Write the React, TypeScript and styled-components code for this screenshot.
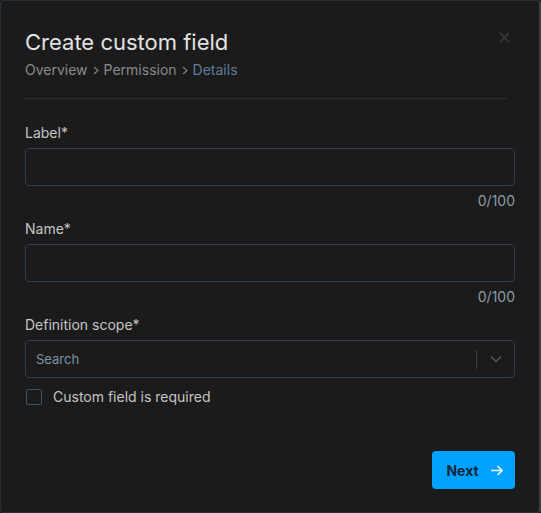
import React from 'react';
import styled, { createGlobalStyle } from 'styled-components';

const GlobalStyle = createGlobalStyle`
  html, body {
    margin: 0;
    padding: 0;
    background: #1b1b1b;
  }
  * {
    box-sizing: border-box;
  }
`;

const Modal = styled.div`
  position: relative;
  width: 541px;
  height: 513px;
  background: #1b1b1b;
  border: 1px solid #27313b;
  border-right: 2px solid #3a3f44;
  border-radius: 4px;
  padding: 26px 24px 0 24px;
  font-family: Inter, 'Noto Sans', sans-serif;
  color: #d0d0d0;
  display: flex;
  flex-direction: column;
`;

const Title = styled.h1`
  margin: 0;
  font-size: 22px;
  line-height: 30px;
  font-weight: 400;
  color: #e2e2e2;
`;

const Crumbs = styled.div`
  margin-top: 3px;
  display: flex;
  align-items: center;
  gap: 5px;
  font-size: 14px;
  line-height: 20px;
`;

const Crumb = styled.span<{ $active?: boolean }>`
  color: ${(p) => (p.$active ? '#5e7d96' : '#8a8a8a')};
`;

const Sep = styled.span`
  display: flex;
  align-items: center;
  margin-top: 1px;
`;

const Divider = styled.hr`
  margin: 18px 8px 0 0;
  border: none;
  border-top: 1px solid #24323f;
`;

const Close = styled.button`
  position: absolute;
  top: 30px;
  right: 29px;
  width: 12px;
  height: 12px;
  padding: 0;
  border: none;
  background: none;
  display: flex;
  align-items: center;
  justify-content: center;
`;

const Field = styled.div<{ $top: number }>`
  margin-top: ${(p) => p.$top}px;
  display: flex;
  flex-direction: column;
`;

const Label = styled.label`
  font-size: 14px;
  line-height: 20px;
  color: #c6c6c6;
  margin-bottom: 5px;
`;

const Input = styled.input`
  height: 38px;
  width: 100%;
  background: #1b1b1b;
  border: 1px solid #2f3e4c;
  border-radius: 4px;
  outline: none;
  color: #d0d0d0;
  font-family: inherit;
  font-size: 14px;
  padding: 0 11px;
`;

const Counter = styled.div`
  margin-top: 5px;
  align-self: flex-end;
  font-size: 14px;
  line-height: 20px;
  color: #8b9ba8;
`;

const Select = styled.div`
  height: 38px;
  border: 1px solid #2f3e4c;
  border-radius: 4px;
  display: flex;
  align-items: center;
  padding-left: 10px;
`;

const Placeholder = styled.span`
  flex: 1;
  font-size: 13px;
  color: #7d93a5;
`;

const SelectDivider = styled.span`
  width: 1px;
  height: 19px;
  background: #34434f;
`;

const Chevron = styled.span`
  width: 37px;
  display: flex;
  align-items: center;
  justify-content: center;
`;

const CheckRow = styled.label`
  margin-top: 9px;
  display: flex;
  align-items: center;
  gap: 11px;
  font-size: 14px;
  line-height: 20px;
  color: #c6c6c6;
`;

const Box = styled.span`
  width: 16px;
  height: 16px;
  border: 1px solid #3f5263;
  border-radius: 2px;
  margin-left: 1px;
`;

const Footer = styled.div`
  margin-top: 44px;
  display: flex;
  justify-content: flex-end;
`;

const NextButton = styled.button`
  height: 38px;
  width: 83px;
  border: none;
  border-radius: 4px;
  background: #00a2ff;
  color: #17273a;
  font-family: inherit;
  font-size: 14px;
  font-weight: 700;
  display: flex;
  align-items: center;
  justify-content: center;
  gap: 11px;
  padding: 0 0 0 2px;
`;

const Chev: React.FC = () => (
  <svg width="6" height="9" viewBox="0 0 6 9">
    <path d="M1 1L5 4.5L1 8" fill="none" stroke="#7e7e7e" strokeWidth="1.2" />
  </svg>
);

const App: React.FC = () => {
  return (
    <>
      <GlobalStyle />
      <Modal>
        <Close aria-label="close">
          <svg width="11" height="11" viewBox="0 0 11 11">
            <path d="M1 1L10 10M10 1L1 10" stroke="#3b3b3b" strokeWidth="1.5" />
          </svg>
        </Close>
        <Title>Create custom field</Title>
        <Crumbs>
          <Crumb>Overview</Crumb>
          <Sep><Chev /></Sep>
          <Crumb>Permission</Crumb>
          <Sep><Chev /></Sep>
          <Crumb $active>Details</Crumb>
        </Crumbs>
        <Divider />

        <Field $top={24}>
          <Label>Label*</Label>
          <Input />
          <Counter>0/100</Counter>
        </Field>

        <Field $top={8}>
          <Label>Name*</Label>
          <Input />
          <Counter>0/100</Counter>
        </Field>

        <Field $top={8}>
          <Label>Definition scope*</Label>
          <Select>
            <Placeholder>Search</Placeholder>
            <SelectDivider />
            <Chevron>
              <svg width="12" height="8" viewBox="0 0 12 8">
                <path d="M1 1.5L6 6.5L11 1.5" fill="none" stroke="#4c5964" strokeWidth="1.5" />
              </svg>
            </Chevron>
          </Select>
        </Field>

        <CheckRow>
          <Box />
          Custom field is required
        </CheckRow>

        <Footer>
          <NextButton>
            Next
            <svg width="13" height="11" viewBox="0 0 13 11">
              <path d="M1 5.5H12M7.5 1L12 5.5L7.5 10" fill="none" stroke="#e8f4ff" strokeWidth="1.6" />
            </svg>
          </NextButton>
        </Footer>
      </Modal>
    </>
  );
};

export default App;
